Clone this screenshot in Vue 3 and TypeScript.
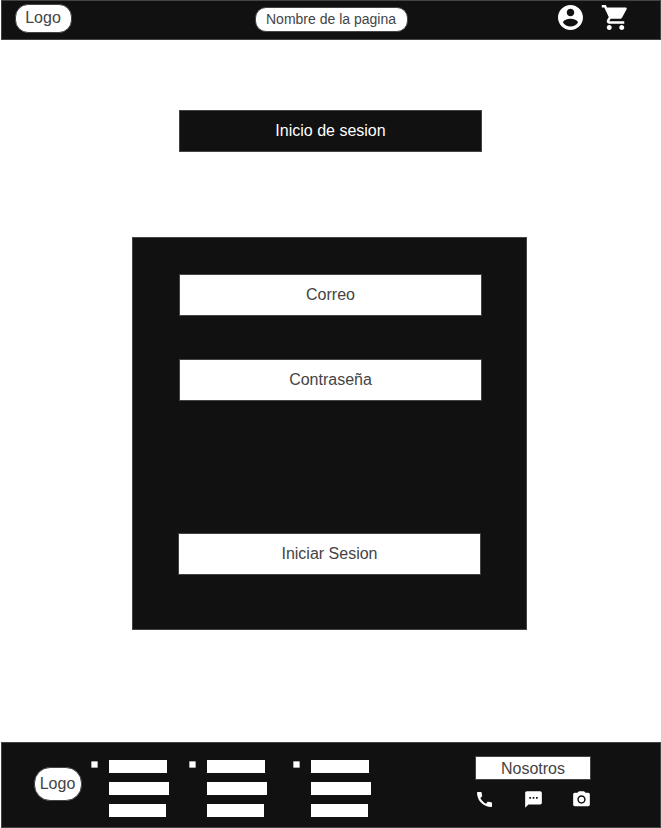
<script setup lang="ts">
interface LinkColumn {
  id: number
  bars: number[]
}

const columns: LinkColumn[] = [
  { id: 1, bars: [58, 60, 57] },
  { id: 2, bars: [58, 60, 57] },
  { id: 3, bars: [58, 60, 57] },
]
</script>

<template>
  <div class="page">
    <header class="header">
      <div class="pill logo">Logo</div>
      <div class="pill site-name">Nombre de la pagina</div>
      <nav class="actions">
        <svg class="icon-lg" viewBox="-0.4 -0.4 24.8 24.8">
          <path d="M12 2C6.48 2 2 6.48 2 12s4.48 10 10 10 10-4.48 10-10S17.52 2 12 2zm0 3c1.66 0 3 1.34 3 3s-1.34 3-3 3-3-1.34-3-3 1.34-3 3-3zm0 14.2c-2.5 0-4.71-1.28-6-3.22.03-1.99 4-3.08 6-3.08 1.99 0 5.97 1.09 6 3.08-1.29 1.94-3.5 3.22-6 3.22z" />
        </svg>
        <svg class="icon-lg" viewBox="-0.4 -0.4 24.8 24.8">
          <path d="M7 18c-1.1 0-1.99.9-1.99 2S5.9 22 7 22s2-.9 2-2-.9-2-2-2zM1 2v2h2l3.6 7.59-1.35 2.45c-.16.28-.25.61-.25.96 0 1.1.9 2 2 2h12v-2H7.42c-.14 0-.25-.11-.25-.25l.03-.12.9-1.63h7.45c.75 0 1.41-.41 1.75-1.03l3.58-6.49c.08-.14.12-.31.12-.48 0-.55-.45-1-1-1H5.21l-.94-2H1zm16 16c-1.1 0-1.99.9-1.99 2s.89 2 1.99 2 2-.9 2-2-.9-2-2-2z" />
        </svg>
      </nav>
    </header>

    <h1 class="title">Inicio de sesion</h1>

    <main class="panel">
      <div class="field">Correo</div>
      <div class="field">Contraseña</div>
      <button class="field submit" type="button">Iniciar Sesion</button>
    </main>

    <footer class="footer">
      <div class="pill footer-logo">Logo</div>
      <div class="columns">
        <section v-for="col in columns" :key="col.id" class="column">
          <i class="bullet"></i>
          <div class="bars">
            <div v-for="(w, i) in col.bars" :key="i" class="bar" :style="{ width: w + 'px' }"></div>
          </div>
        </section>
      </div>
      <div class="about">
        <div class="about-label">Nosotros</div>
        <div class="contacts">
          <svg class="icon-sm" viewBox="-0.6 -0.6 25.2 25.2">
            <path d="M20.01 15.38c-1.23 0-2.42-.2-3.53-.56-.35-.12-.74-.03-1.01.24l-1.57 1.97c-2.83-1.35-5.48-3.9-6.89-6.83l1.95-1.66c.27-.28.35-.67.24-1.02-.37-1.11-.56-2.3-.56-3.53 0-.54-.45-.99-.99-.99H4.19C3.65 3 3 3.24 3 3.99 3 13.28 10.73 21 20.01 21c.71 0 .99-.63.99-1.18v-3.45c0-.54-.45-.99-.99-.99z" />
          </svg>
          <svg class="icon-sm" viewBox="-0.6 -0.6 25.2 25.2">
            <path d="M20 2H4c-1.1 0-1.99.9-1.99 2L2 22l4-4h14c1.1 0 2-.9 2-2V4c0-1.1-.9-2-2-2zM9 11H7V9h2v2zm4 0h-2V9h2v2zm4 0h-2V9h2v2z" />
          </svg>
          <svg class="icon-sm camera" viewBox="-0.6 -0.6 25.2 25.2">
            <circle cx="12" cy="12" r="3.2" />
            <path d="M9 2L7.17 4H4c-1.1 0-2 .9-2 2v12c0 1.1.9 2 2 2h16c1.1 0 2-.9 2-2V6c0-1.1-.9-2-2-2h-3.17L15 2H9zm3 15c-2.76 0-5-2.24-5-5s2.24-5 5-5 5 2.24 5 5-2.24 5-5 5z" />
          </svg>
        </div>
      </div>
    </footer>
  </div>
</template>

<style>
body {
  background: #fff;
}
</style>

<style scoped>
.page {
  box-sizing: border-box;
  width: 661px;
  height: 828px;
  padding-left: 1px;
  display: flex;
  flex-direction: column;
  font-family: "Liberation Sans", Arial, sans-serif;
  font-size: 16px;
  color: #444;
  overflow: hidden;
}
.page * {
  box-sizing: border-box;
}
.header,
.title,
.panel,
.footer {
  background: #111;
  border: 1px solid #444;
  flex: none;
}
.header {
  height: 40px;
  display: flex;
  align-items: flex-start;
}
.pill {
  display: flex;
  align-items: center;
  justify-content: center;
  background: #fff;
  border: 1px solid #444;
  white-space: nowrap;
}
.logo {
  width: 57px;
  height: 29px;
  margin: 3px 0 0 13px;
  padding: 0 1px 2px 0;
  border-radius: 13px;
}
.site-name {
  width: 153px;
  height: 25px;
  margin: 6px 0 0 183px;
  padding: 0 1px 1px 0;
  border-radius: 11px;
  font-size: 14px;
}
.actions {
  display: flex;
  gap: 14px;
  margin: 1px 0 0 147px;
}
.icon-lg {
  display: block;
  width: 31px;
  height: 31px;
  fill: #fff;
}
.title {
  width: 303px;
  height: 42px;
  margin: 70px 0 0 178px;
  display: flex;
  align-items: center;
  justify-content: center;
  font-size: 16px;
  font-weight: 400;
  color: #fff;
}
.panel {
  width: 395px;
  height: 393px;
  margin: 85px 0 0 131px;
  padding: 36px 0 0 46px;
  display: flex;
  flex-direction: column;
  gap: 43px;
}
.field {
  width: 303px;
  height: 42px;
  padding: 0;
  display: flex;
  align-items: center;
  justify-content: center;
  background: #fff;
  border: 1px solid #444;
  font: inherit;
  color: inherit;
}
.submit {
  margin: 89px 0 0 -1px;
}
.footer {
  height: 86px;
  margin-top: 112px;
  display: flex;
  align-items: flex-start;
}
.footer-logo {
  width: 48px;
  height: 34px;
  margin: 24px 0 0 32px;
  padding-right: 1px;
  border-radius: 16px;
}
.columns {
  display: grid;
  grid-template-columns: 98px 104px 80px;
  margin: 17px 0 0 9px;
}
.column {
  display: flex;
  align-items: flex-start;
  gap: 11px;
}
.bullet {
  width: 7px;
  height: 7px;
  margin-top: 1px;
  background: #fff;
  border: 1px solid #aaa;
  border-radius: 1px;
}
.bars {
  display: flex;
  flex-direction: column;
  gap: 9px;
}
.bar {
  height: 13px;
  background: #fff;
}
.about {
  margin: 13px 0 0 102px;
}
.about-label {
  width: 116px;
  height: 24px;
  padding-top: 2px;
  display: flex;
  align-items: center;
  justify-content: center;
  background: #fff;
  border: 1px solid #444;
}
.contacts {
  display: flex;
  gap: 28px;
  margin: 9px 0 0 -1px;
}
.icon-sm {
  display: block;
  width: 21px;
  height: 21px;
  fill: #fff;
}
.camera {
  margin-left: -1px;
}
</style>
